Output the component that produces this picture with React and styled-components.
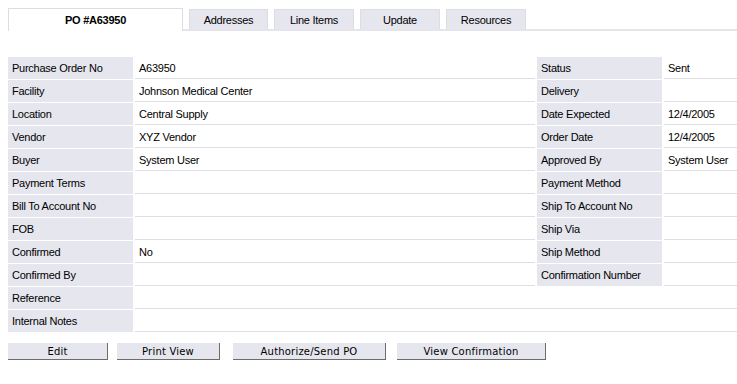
import React from "react";
import styled, { createGlobalStyle } from "styled-components";

const Global = createGlobalStyle`
  body {
    margin: 0;
    background: #ffffff;
    font-family: Tahoma, "Liberation Sans", Arial, sans-serif;
    font-size: 11px;
    letter-spacing: -0.25px;
    color: #000;
  }
`;

const dots = `
  background-color: #e6e6ee;
  background-image: radial-gradient(#dadae2 0.6px, transparent 0.7px);
  background-size: 2px 2px;
`;

const Page = styled.div`
  padding: 8px 0 0 8px;
`;

const TabBar = styled.div`
  display: flex;
  align-items: flex-end;
  gap: 6px;
  border-bottom: 2px solid #e4e4ea;
  height: 21px;
`;

const Tab = styled.div`
  box-sizing: border-box;
  width: ${p => p.w}px;
  height: ${p => (p.active ? 23 : 20)}px;
  margin-bottom: ${p => (p.active ? -2 : 0)}px;
  display: flex;
  justify-content: center;
  align-items: center;
  padding-bottom: ${p => (p.active ? 1 : 0)}px;
  border: 1px solid #dcdce4;
  border-bottom: none;
  font-weight: ${p => (p.active ? "bold" : "normal")};
  ${p => (p.active ? "background: #fff;" : dots)}
`;

const Grid = styled.div`
  margin-top: 26px;
  display: grid;
  grid-template-columns: 125px 400px 125px 1fr;
  column-gap: 2px;
  row-gap: 1px;
`;

const Label = styled.div`
  height: 22px;
  line-height: 22px;
  padding-left: 4px;
  white-space: nowrap;
  ${dots}
`;

const Value = styled.div`
  height: 22px;
  line-height: 22px;
  box-sizing: border-box;
  padding-left: 4px;
  border-bottom: 1px solid #dedee6;
  white-space: nowrap;
  overflow: hidden;
  grid-column: ${p => (p.span ? "2 / 5" : "auto")};
`;

const Buttons = styled.div`
  display: flex;
  margin-top: 11px;
`;

const Button = styled.button`
  box-sizing: border-box;
  width: ${p => p.w}px;
  margin-right: ${p => p.gap}px;
  height: 17px;
  padding: 0;
  font-family: "DejaVu Sans", Verdana, sans-serif;
  font-size: 10px;
  letter-spacing: 0.2px;
  color: #000;
  border: none;
  border-right: 1px solid #6c6c6c;
  border-bottom: 1px solid #6c6c6c;
  ${dots}
`;

const tabs = [
  { t: "PO #A63950", w: 175, active: true },
  { t: "Addresses", w: 79 },
  { t: "Line Items", w: 80 },
  { t: "Update", w: 80 },
  { t: "Resources", w: 80 }
];

const rows = [
  ["Purchase Order No", "A63950", "Status", "Sent"],
  ["Facility", "Johnson Medical Center", "Delivery", ""],
  ["Location", "Central Supply", "Date Expected", "12/4/2005"],
  ["Vendor", "XYZ Vendor", "Order Date", "12/4/2005"],
  ["Buyer", "System User", "Approved By", "System User"],
  ["Payment Terms", "", "Payment Method", ""],
  ["Bill To Account No", "", "Ship To Account No", ""],
  ["FOB", "", "Ship Via", ""],
  ["Confirmed", "No", "Ship Method", ""],
  ["Confirmed By", "", "Confirmation Number", ""],
  ["Reference", ""],
  ["Internal Notes", ""]
];

const buttons = [
  { t: "Edit", w: 100, gap: 9 },
  { t: "Print View", w: 103, gap: 13 },
  { t: "Authorize/Send PO", w: 153, gap: 11 },
  { t: "View Confirmation", w: 149, gap: 0 }
];

export default function App() {
  return (
    <Page>
      <Global />
      <TabBar>
        {tabs.map(tab => (
          <Tab key={tab.t} w={tab.w} active={tab.active}>
            {tab.t}
          </Tab>
        ))}
      </TabBar>
      <Grid>
        {rows.map(r =>
          r.length === 4 ? (
            <React.Fragment key={r[0]}>
              <Label>{r[0]}</Label>
              <Value>{r[1]}</Value>
              <Label>{r[2]}</Label>
              <Value>{r[3]}</Value>
            </React.Fragment>
          ) : (
            <React.Fragment key={r[0]}>
              <Label>{r[0]}</Label>
              <Value span>{r[1]}</Value>
            </React.Fragment>
          )
        )}
      </Grid>
      <Buttons>
        {buttons.map(b => (
          <Button key={b.t} w={b.w} gap={b.gap}>
            {b.t}
          </Button>
        ))}
      </Buttons>
    </Page>
  );
}
